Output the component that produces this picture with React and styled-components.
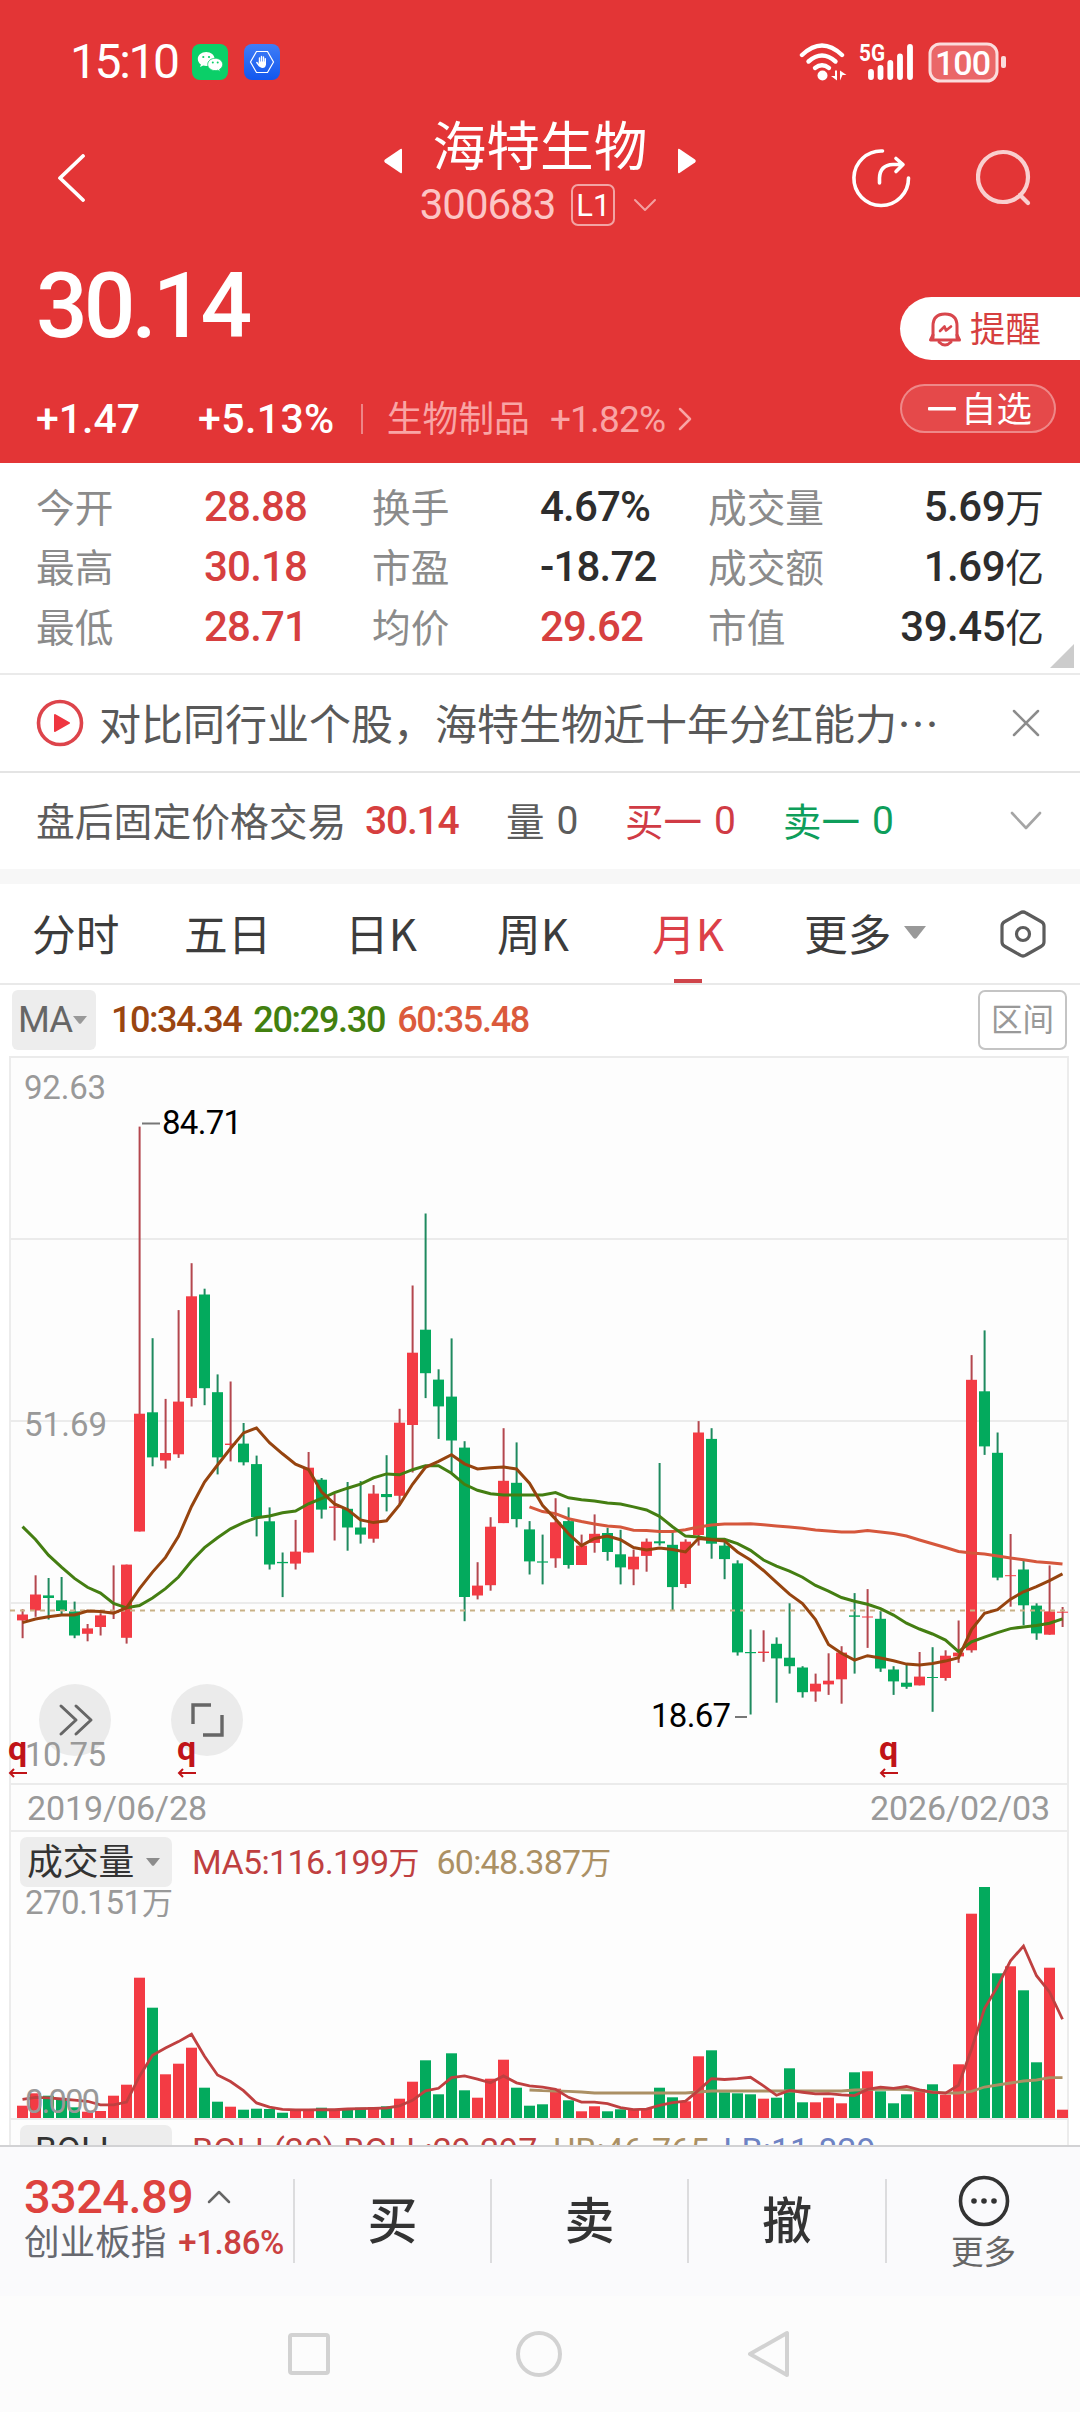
import React from 'react'
import styled, { createGlobalStyle } from 'styled-components'

const RED = '#d63f3f'
const UP = '#f33b44'
const DOWN = '#03aa5d'

const GlobalStyle = createGlobalStyle`
  * { box-sizing: border-box; }
  body {
    margin: 0;
    background: #fff;
    font-family: 'Noto Sans CJK SC', sans-serif;
    color: #333;
  }
  svg { display: block; flex: none; }
`;

const Screen = styled.div`
  width: 1080px;
  height: 2412px;
  overflow: hidden;
  display: flex;
  flex-direction: column;
`;

const Num = styled.span`
  font-family: Roboto, sans-serif;
  font-size: ${p => p.size}px;
  font-weight: ${p => p.weight || 500};
  letter-spacing: ${p => p.ls || 0}px;
  margin-left: ${p => p.gap || 0}px;
  color: ${p => p.color || 'inherit'};
  line-height: 1;
  white-space: nowrap;
`;

const Text = styled.span`
  font-size: ${p => p.size}px;
  color: ${p => p.color || 'inherit'};
  padding-bottom: 4px;
  line-height: 1;
  white-space: nowrap;
`;

/* header */

const Header = styled.header`
  height: 463px;
  flex: none;
  background: #e33536;
  color: #fff;
`;

const StatusBar = styled.div`
  height: 124px;
  padding: 0 73px 0 70px;
  display: flex;
  align-items: center;
`;

const AppIcons = styled.div`
  display: flex;
  gap: 16px;
  margin-left: 14px;
  flex: 1;
`;

const TitleBar = styled.div`
  height: 112px;
  display: grid;
  grid-template-columns: 384px 312px 1fr;
  align-items: start;
`;

const BackButton = styled.div`
  padding: 30px 0 0 56px;
`;

const TitleBlock = styled.div`
  display: flex;
  flex-direction: column;
  align-items: center;
`;

const TitleRow = styled.div`
  display: flex;
  justify-content: space-between;
  width: 312px;
  height: 54px;
  margin-top: -8px;

  svg { margin-top: 32px; }
`;

const CodeRow = styled.div`
  display: flex;
  align-items: center;
  height: 44px;
  margin: 13px 3px 0 0;
`;

const Level = styled.div`
  width: 44px;
  height: 42px;
  margin: 0 18px 0 16px;
  border: 2px solid rgba(255, 255, 255, 0.55);
  border-radius: 7px;
  display: flex;
  align-items: center;
  justify-content: center;
`;

const TitleActions = styled.div`
  display: flex;
  gap: 62px;
  padding: 23px 0 0 154px;
`;

const Quote = styled.div`
  height: 227px;
  display: grid;
  grid-template-columns: 1fr 180px;
`;

const QuoteMain = styled.div`
  padding: 25px 0 0 36px;
  display: flex;
  flex-direction: column;
  align-items: flex-start;
`;

const Change = styled.div`
  display: flex;
  align-items: center;
  height: 44px;
  margin-top: 45px;
`;

const Bar = styled.i`
  width: 2px;
  height: 30px;
  margin: 0 24px 0 26px;
  background: rgba(255, 255, 255, 0.4);
`;

const Industry = styled.span`
  display: flex;
  align-items: center;
  gap: 12px;
`;

const QuoteSide = styled.div`
  padding-top: 61px;
`;

const Remind = styled.div`
  height: 63px;
  padding-left: 28px;
  border-radius: 32px 0 0 32px;
  background: #fff;
  display: flex;
  align-items: center;
  gap: 8px;
`;

const Favorite = styled.div`
  width: 156px;
  height: 49px;
  margin-top: 24px;
  padding-left: 26px;
  border: 2px solid rgba(255, 255, 255, 0.35);
  border-radius: 25px;
  background: rgba(255, 255, 255, 0.1);
  display: flex;
  align-items: center;
  gap: 5px;
`;

/* stats */

const Stats = styled.section`
  height: 212px;
  flex: none;
  padding: 14px 36px 0;
  border-bottom: 2px solid #eaeaea;
  display: grid;
  grid-template-columns: 168px 168px 168px 168px 130px 1fr;
  grid-auto-rows: 60px;
  position: relative;
`;

const Label = styled.span`
  font-size: 38.7px;
  line-height: 56px;
  color: #8b8b8b;
  white-space: nowrap;
`;

const Value = styled.span`
  display: flex;
  align-items: center;
  height: 60px;
  color: ${p => (p.up ? RED : '#2d2d2d')};
  justify-content: ${p => (p.right ? 'flex-end' : 'flex-start')};
`;

const Corner = styled.svg`
  position: absolute;
  right: 6px;
  bottom: 5px;
`;

const News = styled.section`
  height: 98px;
  flex: none;
  padding: 0 40px 0 36px;
  border-bottom: 2px solid #e4e4e4;
  display: flex;
  align-items: center;
`;

const NewsText = styled.div`
  flex: 1;
  margin-left: 15px;
  padding-bottom: 2px;
  font-size: 42px;
  line-height: 60px;
  color: #595959;
  white-space: nowrap;
`;

const Fixed = styled.section`
  height: 96px;
  flex: none;
  padding: 0 39px 0 36px;
  display: grid;
  grid-template-columns: 329px 141px 119px 158px 1fr 31px;
  align-items: center;
`;

const Pair = styled.span`
  display: flex;
  align-items: center;
  gap: 12px;
  color: ${p => p.color || '#5c5c5c'};
`;

const Tabs = styled.nav`
  height: 116px;
  flex: none;
  padding: 0 36px 0 32px;
  border-top: 15px solid #f7f7f7;
  border-bottom: 2px solid #e9e9e9;
  display: grid;
  grid-template-columns: 152px 161px 152px 155px 152px 1fr 44px;
  align-items: center;
`;

const Tab = styled.div`
  display: flex;
  align-items: center;
  gap: 13px;
  height: 99px;
  padding-bottom: 3px;
  font-size: 43.7px;
  color: ${p => (p.active ? '#dc4048' : '#3c3c3c')};
  position: relative;

  &::after {
    content: '';
    display: ${p => (p.active ? 'block' : 'none')};
    position: absolute;
    left: 22px;
    bottom: 0;
    width: 28px;
    height: 4px;
    background: #cf444a;
  }
`;

/* chart */

const MaBar = styled.div`
  height: 71px;
  flex: none;
  padding: 5px 13px 6px 12px;
  display: flex;
  align-items: center;
`;

const MaSelect = styled.div`
  width: 84px;
  height: 60px;
  padding-left: 6px;
  margin-right: 15px;
  border-radius: 6px;
  background: #ededed;
  display: flex;
  align-items: center;
  gap: 1px;
`;

const RangeButton = styled.div`
  width: 89px;
  height: 60px;
  margin-left: auto;
  border: 2px solid #c4c4c4;
  border-radius: 7px;
  display: flex;
  align-items: center;
  justify-content: center;
`;

const Panel = styled.div`
  width: 1060px;
  margin-left: 9px;
  flex: none;
  border: 2px solid #ececec;
  border-width: 0 2px;
  background: #fdfdfd;
`;

const ChartArea = styled.div`
  margin-left: -11px;
  width: 1080px;
  height: ${p => p.h}px;
`;

const Dates = styled.div`
  height: 47px;
  padding: 0 17px 0 16px;
  border-bottom: 2px solid #ececec;
  display: flex;
  align-items: center;
  justify-content: space-between;
`;

const IndicatorHead = styled.div`
  height: 55px;
  padding: 5px 9px 0;
  display: flex;
  align-items: center;
`;

const IndicatorSelect = styled.div`
  width: 152px;
  height: 50px;
  margin-right: 20px;
  padding: 0 12px 0 7px;
  border-radius: 7px;
  background: #ededed;
  display: flex;
  align-items: center;
  justify-content: space-between;
`;

const BollHead = styled.div`
  height: 25px;
  padding: 5px 9px 0;
  overflow: hidden;
  display: flex;
  align-items: flex-start;

  ${Num} { padding-top: 8px; }
  ${IndicatorSelect} { padding-left: 15px; align-items: flex-start; }
`;

/* footer */

const TradeBar = styled.footer`
  height: 151px;
  flex: none;
  border-top: 2px solid #d2d2d4;
  background: #fafafc;
  display: grid;
  grid-template-columns: 293px 197px 197px 198px 1fr;
`;

const IndexCell = styled.div`
  padding: 26px 0 0 24px;
`;

const IndexLine = styled.div`
  display: flex;
  align-items: center;
  height: ${p => p.h}px;
  gap: ${p => p.gap}px;
`;

const Action = styled.div`
  height: 84px;
  margin-top: 32px;
  padding-bottom: 8px;
  border-left: 2px solid #dcdcde;
  display: flex;
  align-items: center;
  justify-content: center;
  font-size: 50px;
  font-weight: 500;
  line-height: 1;
`;

const MoreAction = styled.div`
  height: 84px;
  margin-top: 32px;
  border-left: 2px solid #dcdcde;

  > div {
    display: flex;
    flex-direction: column;
    align-items: center;
    gap: 7px;
    margin-top: -4px;
  }
`;

const SystemNav = styled.div`
  flex: 1;
  background: #fcfcfc;
  padding: 34px 290px 0 286px;
  display: flex;
  justify-content: space-between;
`;

// [up, high, body top, body bottom, low, volume height]
const candles = [
  [1, 552.2, 557.5, 563.4, 581.2, 12.3], [1, 518.3, 537.5, 553.5, 559.8, 24.7], [0, 521, 538.4, 541, 562.5, 22.3],
  [0, 520, 543.3, 554, 558, 19.7], [0, 544.6, 554.4, 578.5, 581.2, 10.7], [1, 567, 571.4, 576.8, 584.3, 6.3],
  [1, 556.2, 558.4, 570, 578.5, 7], [1, 508.4, 554.4, 555.8, 562, 22.3], [1, 507.6, 507.6, 580.8, 586.6, 33.3],
  [1, 69.6, 356.7, 474.5, 474.5, 140.3], [0, 281.2, 355.3, 400.4, 409.3, 110.3], [1, 341.9, 396, 403.5, 411.6, 43.7],
  [1, 253.1, 344.6, 397.3, 400.9, 54.3], [1, 206.2, 239.3, 341, 349.5, 70.3], [0, 231.7, 237.5, 331.2, 348.2, 30.3],
  [0, 317.4, 335.2, 400.4, 417.4, 16.3], [1, 324.5, 386.6, 388, 404.4, 11.3], [0, 366, 386.6, 405.3, 408.4, 8.3],
  [0, 398.6, 407.1, 460.2, 479.4, 9.3], [0, 450.4, 464.3, 507.5, 512.5, 9], [0, 495.5, 504.9, 506.2, 540.1, 5.3],
  [1, 462.9, 494.6, 506.6, 512.5, 8.3], [1, 395, 410.7, 495.5, 495.5, 9], [0, 421, 422.7, 452.6, 461.6, 10.3],
  [1, 437, 449.5, 450.9, 483.5, 8.3], [0, 425, 451.8, 470.5, 493.7, 9], [0, 424.1, 470.5, 477.6, 486.6, 10.3],
  [1, 428.1, 436.6, 481.7, 485.7, 10.7], [0, 398.2, 437, 440.1, 454.4, 11.7], [1, 351.8, 365.7, 438.8, 447, 19.3],
  [1, 228.5, 295.7, 368, 415.5, 36.3], [0, 156.5, 272.7, 316.2, 341.1, 57.7], [0, 312.3, 322.6, 349.4, 381.9, 23.7],
  [0, 281.4, 339.6, 383.5, 415.5, 64.7], [0, 384.2, 390.6, 540, 564.2, 27.7], [1, 505.2, 528.6, 538.5, 542.4, 20.3],
  [1, 460.2, 469.7, 528.2, 533.7, 39.3], [1, 371.2, 423.8, 466.1, 466.1, 58.3], [0, 385.4, 425.8, 462.1, 470.4, 30.3],
  [0, 464.1, 472.4, 504.4, 517.5, 12.3], [0, 477.6, 504.4, 505.6, 527.4, 13.7], [1, 441.2, 465.3, 501.3, 510.8, 29.3],
  [0, 450.3, 464.1, 508, 511.6, 17.7], [1, 477.6, 488.6, 508, 508, 6.7], [1, 457.4, 476.8, 485.9, 495.7, 11.7],
  [0, 470.8, 476, 495, 503.7, 6.7], [0, 472.8, 497.3, 510.4, 527.4, 8.7], [1, 492.6, 499.7, 512.4, 528.2, 8],
  [1, 481.5, 484.7, 498.9, 514.7, 9], [0, 406, 484.3, 486.3, 488.6, 30.3], [0, 474.8, 487.8, 530.1, 553.5, 20.7],
  [1, 482.3, 484.7, 527, 530.9, 16.7], [1, 364.1, 375.5, 478, 488.6, 61.7], [0, 371.2, 381.9, 486.7, 501.7, 67.7],
  [0, 482.7, 488.6, 502.1, 522.2, 25.7], [0, 503.3, 506.4, 595.4, 598.6, 24.7], [0, 572.5, 595, 596.2, 657.5, 23.7],
  [1, 573.3, 594.6, 596, 604.8, 19.3], [0, 580.4, 586.8, 601.4, 645.7, 20.3], [0, 546.3, 600.7, 609.2, 616.6, 49.7],
  [0, 609.2, 610.5, 635.2, 640.6, 15.7], [1, 616.6, 626.7, 634.5, 644.7, 15.7], [1, 596.3, 623.7, 627.4, 637.9, 20.3],
  [1, 589.2, 595.6, 622.3, 646.7, 14.7], [0, 536.1, 558.4, 559.8, 616.6, 45.7], [1, 532.1, 559.5, 560.5, 590.9, 46.7],
  [0, 554, 561.8, 611.5, 614.9, 26.7], [0, 609.2, 612.5, 624.4, 637.9, 14.7], [0, 607.1, 625.7, 629.8, 631.8, 23.7],
  [1, 595, 619.6, 628.4, 628.4, 29], [0, 590.2, 620, 621, 654.8, 33.7], [1, 593.3, 598.7, 621, 623.7, 23.3],
  [1, 563.5, 595.6, 599.4, 605.8, 53.7], [1, 298.1, 322.8, 593.3, 595.6, 204.3], [0, 273.4, 334.3, 389.4, 397.9, 231.7],
  [0, 375.5, 395.8, 520.6, 523.3, 144.7], [1, 477, 518.2, 519.2, 549.7, 151.7], [0, 504, 512.5, 548.3, 568.3, 127.7],
  [0, 546.3, 548.6, 576.4, 582.8, 55.7], [1, 508.4, 554.4, 577.7, 577.7, 150.3], [1, 550, 554.7, 555.7, 570, 8.3],
]

const ma10 = [
  565.6, 562, 559.8, 558, 558, 554, 554.4, 556.2, 550.8, 531.6, 515.1, 500.4, 479.4, 449.5, 425, 408, 391.5, 375.9, 371, 385.7,
  396.8, 407.1, 412.5, 434.8, 446.9, 452.6, 462.9, 465.6, 463.8, 447.9, 427.3, 410.3, 404.4, 397.7, 406.8, 411.9, 410.7, 410,
  411.9, 426.2, 448.3, 462.1, 476.8, 488.6, 481.5, 479.1, 482.7, 490.6, 493, 491, 492.6, 495, 481.5, 482.7, 483.9, 495, 503,
  513.5, 525.3, 537.1, 546.6, 562.5, 587.5, 596.3, 603.1, 598.7, 601, 603.8, 607.1, 608.1, 606.5, 604.1, 600.7, 572.6, 556.4,
  552.7, 542.2, 534.8, 529.7, 523.6, 516.9,
]

const ma20 = [
  469.6, 482.5, 498.2, 510.2, 521.4, 530.3, 536.1, 546.4, 550.8, 548.6, 541, 531.6, 520, 504, 490.6, 480.7, 471.8, 465.6, 460.7,
  458.9, 455.7, 454, 446.8, 441.5, 435.7, 431.2, 427.2, 420.9, 416.9, 417.8, 412.7, 408.8, 408.8, 416.3, 427.3, 433.3, 436.8,
  438, 438, 438, 438, 435.6, 440.8, 442.8, 444, 445.9, 447.1, 449.9, 453, 459.4, 469.7, 479.1, 479.9, 482.3, 482.3, 486.7, 493.4,
  503, 509.1, 514.2, 520.2, 528.4, 534.1, 540.5, 544.2, 547.3, 551.7, 558.1, 566.2, 572, 577, 583.1, 594.6, 584.8, 580.1, 575.7,
  571.6, 569.9, 568.6, 566.2, 561.8,
]

// starts at bar 39
const ma60 = [
  449.9, 454.6, 456.6, 461.7, 464.5, 466.9, 468.9, 470, 473.2, 473.6, 474.4, 474.4, 472.8, 470, 468, 466.9, 466.9, 466.8, 467.8,
  468.9, 469.9, 471.2, 472.9, 473.9, 474.9, 474.9, 473.6, 474.9, 476.6, 479, 483, 486.8, 490.5, 494.5, 495.9, 496.9, 498.9, 501,
  502.7, 504.7, 505.7, 507,
]

const volMa60 = [
  28, 27.3, 27, 26.7, 26, 25, 25, 25, 25, 25, 25, 25, 25, 26, 27, 27, 27, 27, 27, 27, 27, 27, 27, 27, 27, 28, 28.3, 28.7, 29,
  28.3, 27.5, 26, 25, 25, 26.7, 31, 33, 35, 37, 38, 40.3, 40.3,
]

const earlierVolumes = [15, 25, 25, 16]
const volumes = earlierVolumes.concat(candles.map(c => c[5]))
const volMa5 = candles.map((_, i) => volumes.slice(i, i + 5).reduce((a, b) => a + b, 0) / 5)

const barX = i => 22.5 + i * 13
const points = (list, start = 0) => list.map((y, i) => `${barX(i + start)},${y}`).join(' ')

const Axis = ({ x, y, w, fill = '#999', children }) => (
  <text x={x} y={y} textLength={w} fontFamily='Roboto, sans-serif' fontSize='33' fill={fill}>{children}</text>
)

const Marker = ({ x }) => (
  <g transform={`translate(${x} 684)`}>
    <text x='-1' y='19' fontFamily='Roboto, sans-serif' fontWeight='700' fontSize='34' fill='#c01418'>q</text>
    <path d='M1 32H18M5 28L1 32L5 36' fill='none' stroke='#c01418' strokeWidth='2' />
  </g>
)

const PriceChart = () => (
  <svg width='1080' height='729' viewBox='0 -1 1080 729'>
    {[0, 182, 364, 546, 727].map(y => <path key={y} d={`M10 ${y}H1068`} stroke='#ebebeb' strokeWidth='2' />)}
    <circle cx='75' cy='663' r='36' fill='#ebebeb' />
    <circle cx='207' cy='663' r='36' fill='#ebebeb' />
    <path d='M61 649L76 663L61 677M76 649L91 663L76 677' fill='none' stroke='#666' strokeWidth='3' strokeLinecap='round' strokeLinejoin='round' />
    <path d='M193 667V648H211M222 658V678H203' fill='none' stroke='#666' strokeWidth='3.4' />
    {candles.map(([up, high, top, bottom, low], i) => (
      <g key={i} fill={up ? UP : DOWN}>
        <rect x={barX(i) - 0.9} y={high} width='2' height={low - high} fill={up ? '#b4474e' : '#1f8a5f'} />
        <rect x={barX(i) - 5.5} y={top} width='11' height={Math.max(bottom - top, 1)} />
      </g>
    ))}
    <path d='M10 553.5H1068' stroke='#c9b186' strokeWidth='2' strokeDasharray='5 5' />
    <polyline points={points(ma60, 39)} fill='none' stroke='#d5573c' strokeWidth='3' />
    <polyline points={points(ma20)} fill='none' stroke='#447e12' strokeWidth='3' />
    <polyline points={points(ma10)} fill='none' stroke='#96440f' strokeWidth='3' />
    <Axis x='24' y='42' w='82'>92.63</Axis>
    <Axis x='24' y='379' w='83'>51.69</Axis>
    <Axis x='25' y='709' w='81'>10.75</Axis>
    <path d='M142 66.5H160M735 660H747' stroke='#777' strokeWidth='2' />
    <Axis x='162' y='77' w='80' fill='#000'>84.71</Axis>
    <Axis x='651' y='670' w='80' fill='#000'>18.67</Axis>
    <Marker x='9' />
    <Marker x='178' />
    <Marker x='880' />
  </svg>
)

const VolumeChart = () => (
  <svg width='1080' height='233' viewBox='0 0 1080 233'>
    <path d='M10 232H1068' stroke='#ebebeb' strokeWidth='2' />
    {candles.map((c, i) => (
      <rect key={i} x={barX(i) - 5.5} y={231 - c[5]} width={11} height={c[5]} fill={c[0] ? UP : DOWN} />
    ))}
    <polyline points={points(volMa60.map(v => 231 - v), 39)} fill='none' stroke='#ab9064' strokeWidth='2.800' />
    <polyline points={points(volMa5.map(v => 231 - v))} fill='none' stroke='#bf4040' strokeWidth='2.800' />
    <Axis x='25' y='27' w='117'>270.151</Axis>
    <text x='142' y='27' fontSize='31' fill='#999'>万</text>
    <Axis x='25' y='226' w='75'>0.000</Axis>
  </svg>
)

const Caret = ({ w = 14, h = 8, color = '#999' }) => (
  <svg width={w} height={h} viewBox='0 0 14 8' preserveAspectRatio='none'><path d='M0 0H14L8 7.4Q7 8.2 6 7.4Z' fill={color} /></svg>
)

const Chevron = ({ w, h, d, color, stroke = 2.5 }) => (
  <svg width={w} height={h} viewBox={`0 0 ${w} ${h}`} fill='none' stroke={color} strokeWidth={stroke} strokeLinecap='round' strokeLinejoin='round'><path d={d} /></svg>
)

const WeChatIcon = () => (
  <svg width='36' height='36' viewBox='0 0 36 36'>
    <rect width='36' height='36' rx='8' fill='#0bcf68' />
    <path d='M14.2 8C9.5 8 5.8 11 5.8 15c0 2.2 1.2 4.2 3.1 5.5l-.8 2.6 3.1-1.6c1 .3 2 .4 3 .4C18.9 21.9 22.6 19 22.6 15S18.9 8 14.2 8Z' fill='#fff' />
    <path d='M23.2 14.3c-4.2 0-7.5 2.7-7.5 6.1s3.3 6.2 7.5 6.2c.9 0 1.7-.1 2.5-.4l2.5 1.4-.6-2.3c1.900-1.100 3.100-2.900 3.100-4.900 0-3.400-3.300-6.100-7.500-6.100Z' fill='#fff' stroke='#0bcf68' strokeWidth='.8' />
    <g fill='#0bcf68'><circle cx='11.3' cy='13' r='1.1' /><circle cx='17' cy='13' r='1.1' /><circle cx='20.8' cy='18.6' r='1' /><circle cx='25.7' cy='18.6' r='1' /></g>
  </svg>
)

const GuardIcon = () => (
  <svg width='36' height='36' viewBox='0 0 36 36'>
    <defs>
      <linearGradient id='guard' x1='0' y1='0' x2='0' y2='1'><stop offset='0' stopColor='#3f7df7' /><stop offset='1' stopColor='#1257ee' /></linearGradient>
    </defs>
    <rect width='36' height='36' rx='8' fill='url(#guard)' />
    <path d='M12.500 7.500H23.500L29.500 18L23.500 28.500H12.500L6.500 18Z' fill='none' stroke='#fff' strokeWidth='1.2' />
    <path d='M15.500 19V14M17.500 18V12.500M19.500 18V13M21.300 19V14.800M12.800 18.500L15.500 22' stroke='#fff' strokeWidth='1.4' strokeLinecap='round' />
    <path d='M14.800 17.500H22V20.500Q21.500 24 18.500 24Q16 24 14.800 20.500Z' fill='#fff' />
  </svg>
)

const StatusIcons = () => (
  <svg width='208' height='42' viewBox='0 0 208 42'>
    <g fill='none' stroke='#fff' strokeWidth='4.400' strokeLinecap='round'>
      <path d='M3 14Q23 -5 43 14' />
      <path d='M9.5 20.500Q23 8.500 36.5 20.500' />
      <path d='M16 27Q23 21.500 30 27' />
    </g>
    <circle cx='23.5' cy='34.5' r='5' fill='#fff' />
    <path d='M38 29.5V39.5L32 35H36V29.500ZM41 29.500L47.500 34H43.500L41 39.500Z' fill='#fff' />
    <text x='60' y='20' fontFamily='Roboto, sans-serif' fontWeight='700' fontSize='24' textLength='26' lengthAdjust='spacingAndGlyphs' fill='#fff'>5G</text>
    <path d='M72 31V36M81.5 27V36M91.3 22V36M101 15.5V36M111 6V36' stroke='#fff' strokeWidth='5.800' strokeLinecap='round' />
    <rect x='131' y='3' width='67' height='37' rx='10' fill='rgba(255,255,255,.25)' stroke='#fbdcdc' strokeWidth='3' />
    <rect x='202' y='15' width='5' height='12' rx='2' fill='#fbdcdc' />
    <text x='136' y='34' fontFamily='Roboto, sans-serif' fontWeight='500' fontSize='34' textLength='56' fill='#fff'>100</text>
  </svg>
)

const BellIcon = () => (
  <svg width='34' height='36' viewBox='0 0 34 36' fill='none' stroke='#d8464c' strokeWidth='3' strokeLinejoin='round' strokeLinecap='round'>
    <path d='M5 27V15Q5 3 17 3T29 15V27' />
    <path d='M5 24L2.5 29H31.5L29 24' />
    <path d='M11 31Q17 37 23 31' />
    <path d='M12 20L16.5 15.5L18 19.5L23 15.5' strokeWidth='2.6' />
  </svg>
)

const stats = [
  ['今开', '28.88', 1, '换手', '4.67%', 0, '成交量', '5.69', '万'],
  ['最高', '30.18', 1, '市盈', '-18.72', 0, '成交额', '1.69', '亿'],
  ['最低', '28.71', 1, '均价', '29.62', 1, '市值', '39.45', '亿'],
]

const App = () => (
  <Screen>
    <GlobalStyle />
    <Header>
      <StatusBar>
        <Num size={48} weight={400} ls={-2.4}>15:10</Num>
        <AppIcons><WeChatIcon /><GuardIcon /></AppIcons>
        <StatusIcons />
      </StatusBar>
      <TitleBar>
        <BackButton>
          <Chevron w={30} h={48} d='M27 2L4 24L27 46' color='#fff' stroke={3.8} />
        </BackButton>
        <TitleBlock>
          <TitleRow>
            <svg width='18' height='26' viewBox='0 0 18 26'><path d='M16.5 1Q18 0 18 2V24Q18 26 16.5 25L1 14.5Q-.5 13 1 11.5Z' fill='#fff' /></svg>
            <Text size={53.7}>海特生物</Text>
            <svg width='18' height='26' viewBox='0 0 18 26'><path d='M1.5 1Q0 0 0 2V24Q0 26 1.5 25L17 14.5Q18.5 13 17 11.5Z' fill='#fff' /></svg>
          </TitleRow>
          <CodeRow>
            <Num size={42} weight={400} ls={-1} color='#fcc5c5'>300683</Num>
            <Level><Num size={31} weight={400}>L1</Num></Level>
            <Chevron w={24} h={14} d='M2 2L12 12L22 2' color='#f3a0a0' stroke={2} />
          </CodeRow>
        </TitleBlock>
        <TitleActions>
          <svg width='64' height='64' viewBox='0 0 64 64' fill='none' stroke='#fff' strokeWidth='3.6' strokeLinecap='round' strokeLinejoin='round'>
            <path d='M32.5 4A27.3 27.3 0 1 0 58.5 31' />
            <path d='M29.5 36V31Q30 18 43 17.5H52M46 11.5L53 17.5L46 24.5' />
          </svg>
          <svg width='64' height='64' viewBox='0 0 64 64' fill='none' stroke='#f9cfcf' strokeWidth='4.2' strokeLinecap='round'>
            <circle cx='27' cy='30' r='25' />
            <path d='M44 48L52 56' />
          </svg>
        </TitleActions>
      </TitleBar>
      <Quote>
        <QuoteMain>
          <Num size={91} weight={500} ls={-4}>30.14</Num>
          <Change>
            <Num size={41}>+1.47</Num>
            <Num size={41} ls={0.4} gap={58}>+5.13%</Num>
            <Bar />
            <Text size={35.8} color='#f9a5a5'>生物制品</Text>
            <Industry>
              <Num size={37} weight={400} color='#f9a5a5' ls={-0.8} gap={20}>+1.82%</Num>
              <Chevron w={16} h={24} d='M3 2L13 12L3 22' color='#f9a5a5' />
            </Industry>
          </Change>
        </QuoteMain>
        <QuoteSide>
          <Remind><BellIcon /><Text size={35.4} color={RED}>提醒</Text></Remind>
          <Favorite>
            <svg width='28' height='4'><rect width='28' height='3.4' rx='1' fill='#fff' /></svg>
            <Text size={35.4}>自选</Text>
          </Favorite>
        </QuoteSide>
      </Quote>
    </Header>

    <Stats>
      {stats.map(([l1, v1, up1, l2, v2, up2, l3, v3, unit]) => (
        <React.Fragment key={l1}>
          <Label>{l1}</Label>
          <Value up={up1}><Num size={42} ls={-0.8}>{v1}</Num></Value>
          <Label>{l2}</Label>
          <Value up={up2}><Num size={42} ls={-0.8}>{v2}</Num></Value>
          <Label>{l3}</Label>
          <Value right><Num size={42} ls={-0.4}>{v3}</Num><Text size={38.7}>{unit}</Text></Value>
        </React.Fragment>
      ))}
      <Corner width='24' height='24'><path d='M24 0V24H0Z' fill='#ccc' /></Corner>
    </Stats>

    <News>
      <svg width='48' height='48' viewBox='0 0 48 48'>
        <circle cx='24' cy='24' r='21.5' fill='none' stroke='#dd444b' strokeWidth='3.6' />
        <path d='M19 16L33 24L19 32Z' fill='#ef3640' stroke='#ef3640' strokeWidth='2' strokeLinejoin='round' />
      </svg>
      <NewsText>对比同行业个股，海特生物近十年分红能力⋯</NewsText>
      <Chevron w={28} h={28} d='M2 2L26 26M26 2L2 26' color='#8c8c8c' />
    </News>

    <Fixed>
      <Text size={38.8} color='#5c5c5c'>盘后固定价格交易</Text>
      <Num size={39} ls={-1.2} color={RED}>30.14</Num>
      <Pair><Text size={38.5}>量</Text><Num size={39} weight={400}>0</Num></Pair>
      <Pair color='#d03b45'><Text size={38.5}>买一</Text><Num size={39} weight={400}>0</Num></Pair>
      <Pair color='#0e9e5b'><Text size={38.5}>卖一</Text><Num size={39} weight={400}>0</Num></Pair>
      <Chevron w={32} h={20} d='M2 2L16 17L30 2' color='#a5a5a5' stroke={2.6} />
    </Fixed>

    <Tabs>
      <Tab>分时</Tab>
      <Tab>五日</Tab>
      <Tab>日K</Tab>
      <Tab>周K</Tab>
      <Tab active>月K</Tab>
      <Tab>更多<Caret w={22} h={13} /></Tab>
      <svg width='46' height='48' viewBox='0 0 46 48' fill='none' stroke='#5c5c5c' strokeWidth='3.2' strokeLinejoin='round'>
        <path d='M20 3Q23 1 26 3L41 11.5Q44 13 44 16V32Q44 35 41 36.5L26 45Q23 47 20 45L5 36.5Q2 35 2 32V16Q2 13 5 11.5Z' />
        <circle cx='23' cy='24' r='6.5' />
      </svg>
    </Tabs>

    <MaBar>
      <MaSelect><Num size={36.5} weight={400} ls={-1} color='#666'>MA</Num><Caret /></MaSelect>
      <Num size={36} ls={-1.5} color='#9a4510'>10:34.34</Num>
      <Num size={36} ls={-1.3} gap={12} color='#42800f'>20:29.30</Num>
      <Num size={36} ls={-1.3} gap={12} color='#db5a3c'>60:35.48</Num>
      <RangeButton><Text size={31.5} color='#999'>区间</Text></RangeButton>
    </MaBar>

    <Panel>
      <ChartArea h={729}><PriceChart /></ChartArea>
      <Dates>
        <Num size={34} weight={400} ls={-0.1} color='#999'>2019/06/28</Num>
        <Num size={34} weight={400} ls={-0.1} color='#999'>2026/02/03</Num>
      </Dates>
      <IndicatorHead>
        <IndicatorSelect><Text size={35.8}>成交量</Text><Caret color='#8c8c8c' /></IndicatorSelect>
        <Num size={34} weight={400} ls={-0.6} color='#bf3f40'>MA5:116.199</Num><Text size={31} color='#bf3f40'>万</Text>
        <Num size={34} weight={400} ls={-0.8} gap={17} color='#ab9064'>60:48.387</Num><Text size={31} color='#ab9064'>万</Text>
      </IndicatorHead>
      <ChartArea h={233}><VolumeChart /></ChartArea>
      <BollHead>
        <IndicatorSelect><Num size={35} weight={400}>BOLL</Num></IndicatorSelect>
        <Num size={34} weight={400} color='#bf3f40'>BOLL(20) BOLL:29.297</Num>
        <Num size={34} weight={400} gap={16} color='#ab9064'>UB:46.765</Num>
        <Num size={34} weight={400} gap={14} color='#6e83c4'>LB:11.829</Num>
      </BollHead>
    </Panel>

    <TradeBar>
      <IndexCell>
        <IndexLine h={47} gap={14}>
          <Num size={47} ls={-0.6} color='#dd423e'>3324.89</Num>
          <Chevron w={24} h={14} d='M2 12L12 2L22 12' color='#666' />
        </IndexLine>
        <IndexLine h={44} gap={12}>
          <Text size={35.6} color='#66686f'>创业板指</Text>
          <Num size={33} ls={-0.4} color='#cb4040'>+1.86%</Num>
        </IndexLine>
      </IndexCell>
      <Action>买</Action>
      <Action>卖</Action>
      <Action>撤</Action>
      <MoreAction>
        <div>
          <svg width='52' height='52' viewBox='0 0 52 52'>
            <circle cx='26' cy='26' r='23.5' fill='none' stroke='#333' strokeWidth='3.6' />
            <g fill='#333'><circle cx='16' cy='26' r='2.8' /><circle cx='26' cy='26' r='2.8' /><circle cx='36' cy='26' r='2.8' /></g>
          </svg>
          <Text size={32.5} color='#666'>更多</Text>
        </div>
      </MoreAction>
    </TradeBar>

    <SystemNav>
      <svg width='46' height='48' fill='none' stroke='#d2d2d2' strokeWidth='4'><rect x='4' y='5' width='38' height='38' rx='2' /></svg>
      <svg width='48' height='48' fill='none' stroke='#d2d2d2' strokeWidth='4'><circle cx='24' cy='24' r='21' /></svg>
      <svg width='44' height='48' fill='none' stroke='#d2d2d2' strokeWidth='4' strokeLinejoin='round'><path d='M41 3V45L4 24Z' /></svg>
    </SystemNav>
  </Screen>
)

export default App
